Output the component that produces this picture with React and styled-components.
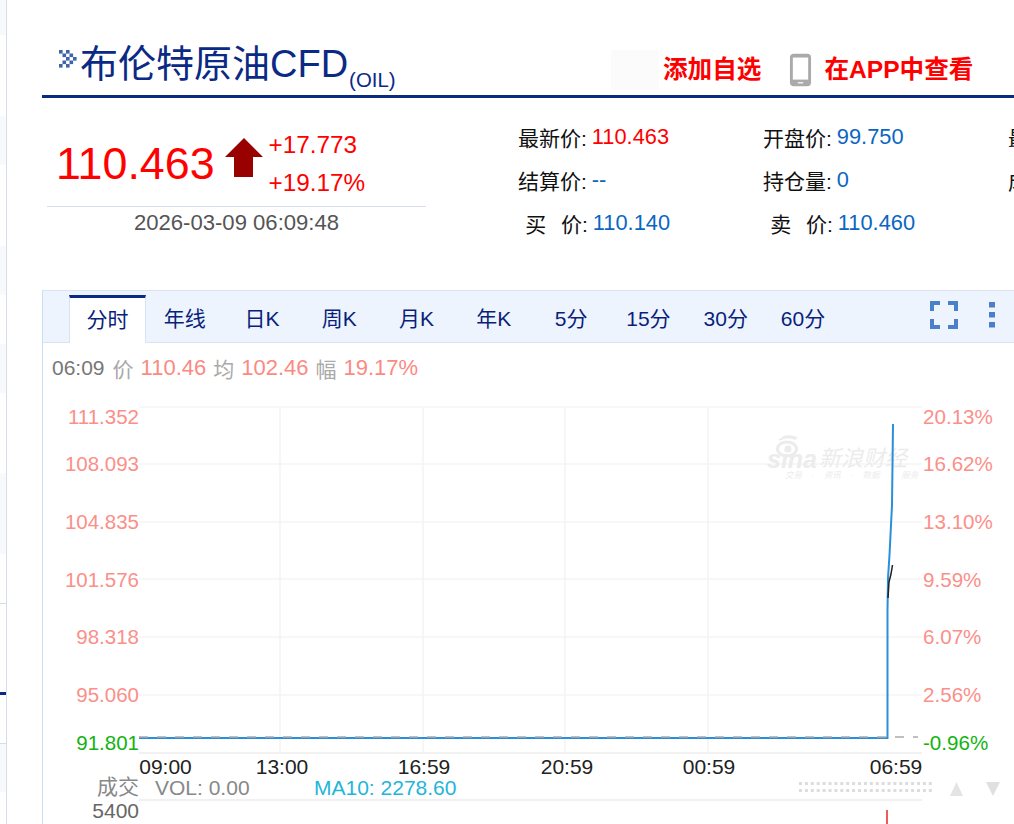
import React from 'react';
import styled, { createGlobalStyle } from 'styled-components';

const FONT = '"Liberation Sans", "Noto Sans CJK SC", sans-serif';

const GlobalStyle = createGlobalStyle`
  html, body {
    margin: 0;
    height: 824px;
    overflow: hidden;
    background: #fff;
    font-family: ${FONT};
  }
`;

const Shell = styled.div`
  display: flex;
  width: 1014px;
  height: 824px;
  overflow: hidden;
`;

const Rail = styled.div`
  flex: none;
  width: 6px;
  display: flex;
  flex-direction: column;
  border-right: 1px solid #d5dee8;
`;

const RailRow = styled.div`
  flex: none;
  height: ${({ $h }) => $h}px;
  background: ${({ $shade }) => ($shade ? '#f7f9fc' : '#fff')};
  border-top: ${({ $line }) => ($line ? `${$line === '#0a2a7f' ? 3 : 1}px solid ${$line}` : 'none')};
  box-sizing: border-box;
`;

const Main = styled.main`
  flex: none;
  width: 1007px;
  padding-left: 35px;
  box-sizing: border-box;
`;

const Header = styled.header`
  height: 98px;
  box-sizing: border-box;
  border-bottom: 3px solid #0a2a7f;
  display: flex;
  align-items: flex-start;
  padding-top: 44px;
`;

const TitleWrap = styled.div`
  width: 569px;
  flex: none;
  display: flex;
  align-items: flex-start;
  padding-left: 17px;
  box-sizing: border-box;
`;

const TitleMark = styled.svg`
  flex: none;
  width: 18px;
  height: 18px;
  margin: 6px 3px 0 0;
`;

const Title = styled.h1`
  margin: 0;
  font-size: 38px;
  line-height: 40px;
  font-weight: 400;
  color: #0a2a85;
  white-space: nowrap;
  small {
    font-size: 20.4px;
    vertical-align: -10px;
    line-height: 20px;
    margin-left: 1px;
  }
`;

const Actions = styled.div`
  display: flex;
  align-items: center;
  margin-top: 6px;
  height: 40px;
`;

const GrayPatch = styled.div`
  width: 48px;
  height: 40px;
  background: #fbfbfb;
  margin-right: 4px;
`;

const ActionText = styled.span`
  font-size: 24.6px;
  font-weight: 700;
  color: #f00;
  white-space: nowrap;
  line-height: 38px;
`;

const PhoneIcon = styled.svg`
  width: 23px;
  height: 36px;
  margin: -1px 12px 0 28px;
  flex: none;
`;

const Summary = styled.section`
  display: flex;
  height: 192px;
`;

const Quote = styled.div`
  flex: none;
  width: 379px;
  margin-left: 5px;
  height: 141px;
`;

const QuoteTop = styled.div`
  height: 109px;
  box-sizing: border-box;
  border-bottom: 1px solid #d5e0ec;
  display: flex;
  padding: 39px 0 0 9px;
`;

const BigPrice = styled.div`
  font-size: 44.8px;
  line-height: 50px;
  color: #f00;
  margin-top: 1px;
`;

const UpArrow = styled.svg`
  flex: none;
  width: 38px;
  height: 40px;
  margin: 1px 6px 0 10px;
`;

const Changes = styled.div`
  font-size: 24.3px;
  line-height: 38px;
  margin-top: -11px;
  color: #f00;
`;

const Stamp = styled.div`
  font-size: 22.1px;
  line-height: 32px;
  text-align: center;
  color: #555;
`;

const Details = styled.dl`
  margin: 17px 0 0;
  padding-left: 92px;
  display: grid;
  grid-template-columns: repeat(3, 245px);
  grid-auto-rows: 43px;
  flex: none;
`;

const Detail = styled.div`
  display: flex;
  align-items: center;
  font-size: 21px;
  white-space: pre;
  color: #111;
`;

const DetailLabel = styled.dt`
  margin: 0;
  word-spacing: 1.5px;
`;

const DetailValue = styled.dd`
  margin: 0 0 0 5px;
  font-size: 21.8px;
  color: ${({ $up }) => ($up ? '#f00' : '#0a66c2')};
`;

const Panel = styled.section`
  border-left: 1px solid #c9e0f3;
`;

const TabBar = styled.nav`
  height: 53px;
  box-sizing: border-box;
  display: flex;
  align-items: flex-end;
  padding-left: 26px;
  background: #edf4fe;
  border-top: 1px solid #d8e3f3;
  border-bottom: 1px solid #d8e3f3;
`;

const Tab = styled.div`
  flex: none;
  width: ${({ $active }) => ($active ? '77px' : '77.3px')};
  height: ${({ $active }) => ($active ? '48px' : '47px')};
  box-sizing: border-box;
  margin-bottom: ${({ $active }) => ($active ? '-1px' : '0')};
  text-align: center;
  font-size: 21px;
  line-height: ${({ $active }) => ($active ? '44px' : '48px')};
  color: #0a1f7a;
  background: ${({ $active }) => ($active ? '#fff' : 'transparent')};
  border-top: ${({ $active }) => ($active ? '3px solid #0a2a85' : '0')};
  border-right: ${({ $active }) => ($active ? '1px solid #d8e3f3' : '0')};
  border-left: ${({ $active }) => ($active ? '1px solid #d8e3f3' : '0')};
`;

const ToolIcons = styled.div`
  margin-left: auto;
  align-self: flex-start;
  display: flex;
  gap: 31px;
  margin-top: 10px;
  padding-right: 19px;
`;

const ToolIcon = styled.svg`
  flex: none;
  display: block;
  width: ${({ $w }) => $w}px;
  height: 28px;
`;

const InfoLine = styled.div`
  height: 42px;
  box-sizing: border-box;
  padding: 8px 0 0 9px;
  display: flex;
  align-items: center;
  gap: 7px;
  font-size: 21px;
  white-space: nowrap;
`;

const InfoText = styled.span`
  font-size: ${({ $tone }) => ($tone === 'value' ? '22px' : '21px')};
  margin-right: ${({ $tone }) => ($tone === 'time' ? '1px' : '0')};
  color: ${({ $tone }) => ({ time: '#777', label: '#aaa', value: '#fb8a82' }[$tone])};
`;

const Chart = styled.svg`
  display: block;
  width: 971px;
  height: 439px;
`;

const AxisText = styled.text`
  font-family: ${FONT};
  font-size: ${({ $size }) => $size || 20.5}px;
  fill: ${({ $fill }) => $fill};
`;

const WatermarkText = styled.text`
  font-family: ${FONT};
  font-style: italic;
  font-size: ${({ $size }) => $size}px;
  font-weight: ${({ $bold }) => ($bold ? 700 : 400)};
  fill: #ececec;
  white-space: pre;
`;

const RAIL = [
  { h: 35, shade: true },
  { h: 81 },
  { h: 49, shade: true },
  { h: 81 },
  { h: 49, shade: true },
  { h: 49 },
  { h: 49, shade: true },
  { h: 80 },
  { h: 81, shade: true },
  { h: 49 },
  { h: 89, line: '#d5dee8' },
  { h: 51, line: '#0a2a7f' },
  { h: 49, shade: true, line: '#d5dee8' },
];

const DETAILS = [
  ['最新价:', '110.463', true],
  ['开盘价:', '99.750'],
  ['最高价:', '111.352', true],
  ['结算价:', '--'],
  ['持仓量:', '0'],
  ['成交量:', '0'],
  ['\u00a0买\u00a0\u00a0价:', '110.140'],
  ['\u00a0卖\u00a0\u00a0价:', '110.460'],
];

const TABS = ['分时', '年线', '日K', '周K', '月K', '年K', '5分', '15分', '30分', '60分'];

const H_GRID = [407, 464, 522, 579, 637, 695, 753, 800];
const V_GRID = [280, 423, 565, 708];

const LEFT_AXIS = [
  ['111.352', 424, '#fb8f8a'],
  ['108.093', 471, '#fb8f8a'],
  ['104.835', 529, '#fb8f8a'],
  ['101.576', 587, '#fb8f8a'],
  ['98.318', 644, '#fb8f8a'],
  ['95.060', 702, '#fb8f8a'],
  ['91.801', 750, '#12b312'],
];

const RIGHT_AXIS = [
  ['20.13%', 424, '#fb8f8a'],
  ['16.62%', 471, '#fb8f8a'],
  ['13.10%', 529, '#fb8f8a'],
  ['9.59%', 587, '#fb8f8a'],
  ['6.07%', 644, '#fb8f8a'],
  ['2.56%', 702, '#fb8f8a'],
  ['-0.96%', 750, '#12b312'],
];

const TIMES = [
  ['09:00', 165.5],
  ['13:00', 282],
  ['16:59', 424],
  ['20:59', 567],
  ['00:59', 709],
  ['06:59', 896],
];

// chevron made of small squares, as in the original bitmap
const MARK_DOTS = [
  [0, 0], [7, 0], [3.5, 3.5], [10.5, 3.5], [7, 7], [14, 7], [3.5, 10.5], [10.5, 10.5], [0, 14], [7, 14],
];

const dotColumns = Array.from({ length: 23 }, (_, i) => 799 + i * 5.9);

const Watermark = () => (
  <g>
    <g fill="none" stroke="#ececec">
      <ellipse cx="787" cy="449" rx="9.5" ry="7" strokeWidth="3" />
      <circle cx="788" cy="449" r="3.5" fill="#ececec" strokeWidth="0" />
      <path d="M779 440q8-5 17-1M783 437q8-2 14 1" strokeWidth="2" />
    </g>
    <WatermarkText x="767" y="468" $size={25} $bold>sina</WatermarkText>
    <WatermarkText x="819" y="466" $size={22}>新浪财经</WatermarkText>
    <WatermarkText x="785" y="478" $size={8.5}>交易    ·    资讯    ·    数据    ·    服务</WatermarkText>
  </g>
);

const App = () => (
  <>
    <GlobalStyle />
    <Shell>
      <Rail>
        {RAIL.map((row, i) => (
          <RailRow key={i} $h={row.h} $shade={row.shade} $line={row.line} />
        ))}
      </Rail>
      <Main>
        <Header>
          <TitleWrap>
            <TitleMark viewBox="0 0 18 18">
              {MARK_DOTS.map(([x, y]) => (
                <rect key={`${x}-${y}`} x={x} y={y} width="3.6" height="3.6" fill="#3f64a8" />
              ))}
            </TitleMark>
            <Title>
              布伦特原油CFD<small>(OIL)</small>
            </Title>
          </TitleWrap>
          <Actions>
            <GrayPatch />
            <ActionText>添加自选</ActionText>
            <PhoneIcon viewBox="0 0 24 36">
              <rect x="1" y="1" width="22" height="34" rx="4" fill="#aaa" />
              <rect x="4" y="5" width="16" height="23" fill="#fff" />
              <rect x="9" y="30.5" width="6" height="1.6" rx="0.8" fill="#eee" />
            </PhoneIcon>
            <ActionText>在APP中查看</ActionText>
          </Actions>
        </Header>
        <Summary>
          <Quote>
            <QuoteTop>
              <BigPrice>110.463</BigPrice>
              <UpArrow viewBox="0 0 38 40">
                <polygon points="19,0 38,19 28,19 28,39 9,39 9,19 0,19" fill="#990000" />
              </UpArrow>
              <Changes>
                <div>+17.773</div>
                <div>+19.17%</div>
              </Changes>
            </QuoteTop>
            <Stamp>2026-03-09 06:09:48</Stamp>
          </Quote>
          <Details>
            {DETAILS.map(([label, value, up]) => (
              <Detail key={label}>
                <DetailLabel>{label}</DetailLabel>
                <DetailValue $up={up}>{value}</DetailValue>
              </Detail>
            ))}
          </Details>
        </Summary>
        <Panel>
          <TabBar>
            {TABS.map((tab, i) => (
              <Tab key={tab} $active={i === 0}>{tab}</Tab>
            ))}
            <ToolIcons>
              <ToolIcon $w={28} viewBox="0 0 28 28" fill="none" stroke="#4a7fc9" strokeWidth="4">
                <path d="M2 10V2h8M18 2h8v8M26 18v8h-8M10 26H2v-8" />
              </ToolIcon>
              <ToolIcon $w={6} viewBox="0 0 6 28" fill="#4a7fc9">
                <rect y="1" width="6" height="5.5" />
                <rect y="11" width="6" height="5.5" />
                <rect y="21" width="6" height="5.5" />
              </ToolIcon>
            </ToolIcons>
          </TabBar>
          <InfoLine>
            <InfoText $tone="time">06:09</InfoText>
            <InfoText $tone="label">价</InfoText>
            <InfoText $tone="value">110.46</InfoText>
            <InfoText $tone="label">均</InfoText>
            <InfoText $tone="value">102.46</InfoText>
            <InfoText $tone="label">幅</InfoText>
            <InfoText $tone="value">19.17%</InfoText>
          </InfoLine>
          <Chart viewBox="43 385 971 439">
            {H_GRID.map((y) => (
              <line key={y} x1="139" x2="922" y1={y} y2={y} stroke={y === 753 || y === 800 ? '#ececec' : '#f5f5f5'} strokeWidth="1.5" />
            ))}
            {V_GRID.map((x) => (
              <line key={x} x1={x} x2={x} y1="407" y2="753" stroke="#f3f3f3" strokeWidth="1.5" />
            ))}
            <Watermark />
            <polyline
              points="139,738 887.5,738 887.5,610 888,578 889.5,555 892,505 893,424"
              fill="none"
              stroke="#2a8fd8"
              strokeWidth="2"
            />
            <line x1="139" x2="918" y1="737" y2="737" stroke="#aaa" strokeWidth="1.5" strokeDasharray="9 9" />
            <polyline points="888,598 889,582 891,574 892.5,565" fill="none" stroke="#222" strokeWidth="1.5" />
            {LEFT_AXIS.map(([text, y, fill]) => (
              <AxisText key={text} x="139" y={y} textAnchor="end" $fill={fill}>{text}</AxisText>
            ))}
            {RIGHT_AXIS.map(([text, y, fill]) => (
              <AxisText key={text} x="923" y={y} $size={20.6} $fill={fill}>{text}</AxisText>
            ))}
            {TIMES.map(([text, x]) => (
              <AxisText key={text} x={x} y="774" textAnchor="middle" $size={21} $fill="#222">{text}</AxisText>
            ))}
            <AxisText x="139" y="794" textAnchor="end" $size={21} $fill="#888">成交</AxisText>
            <AxisText x="155" y="795" $size={21} $fill="#888">VOL: 0.00</AxisText>
            <AxisText x="314" y="795" $size={21} $fill="#1fb6d8">MA10: 2278.60</AxisText>
            <AxisText x="139" y="818" textAnchor="end" $size={21} $fill="#666">5400</AxisText>
            {dotColumns.map((x) => (
              <g key={x} fill="#ddd">
                <rect x={x} y="782" width="3" height="3" />
                <rect x={x} y="789" width="3" height="3" />
              </g>
            ))}
            <polygon points="950,796 963,796 956.5,782" fill="#e4e4e4" />
            <polygon points="986,782 1000,782 993,796" fill="#e0e0e0" />
            <line x1="887" x2="887" y1="810" y2="824" stroke="#e22" strokeWidth="1.5" />
          </Chart>
        </Panel>
      </Main>
    </Shell>
  </>
);

export default App;
